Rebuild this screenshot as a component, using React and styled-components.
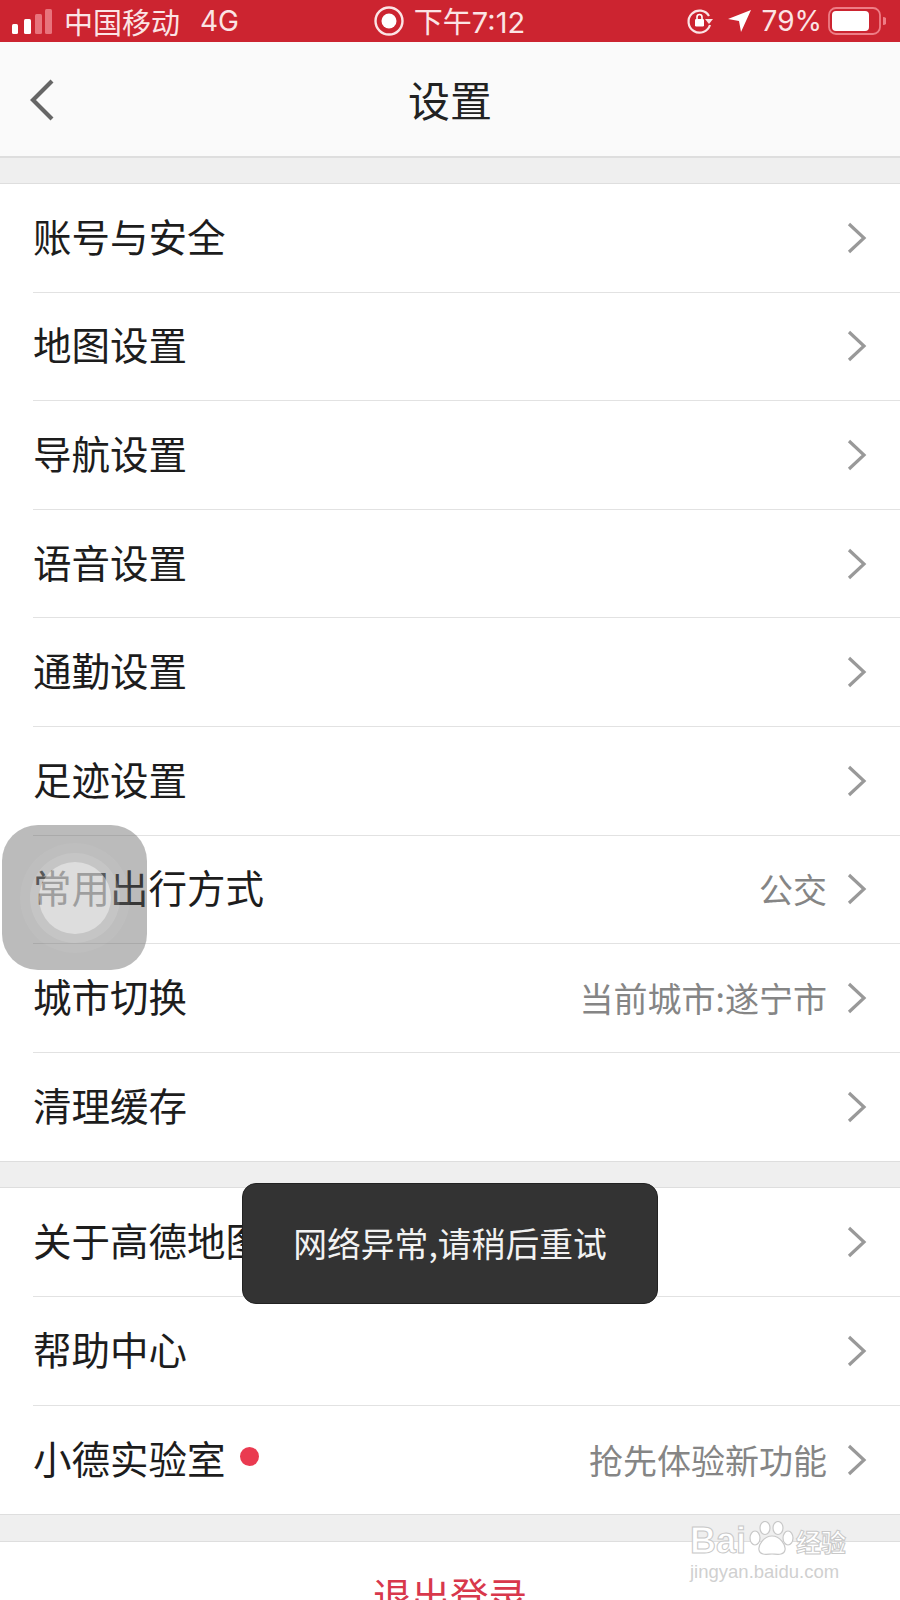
import React from 'react';
import styled, { createGlobalStyle } from 'styled-components';

const GlobalStyle = createGlobalStyle`
  html, body {
    margin: 0;
    padding: 0;
    background: #efefef;
  }
  * {
    box-sizing: border-box;
  }
`;

const FONT = `"Noto Sans CJK SC", "Noto Sans", sans-serif`;

const Page = styled.div`
  position: relative;
  width: 900px;
  height: 1600px;
  overflow: hidden;
  background: #efefef;
  font-family: ${FONT};
`;

const StatusBar = styled.div`
  height: 42px;
  background: #cc2430;
  color: #fbe4e5;
  display: grid;
  grid-template-columns: 1fr auto 1fr;
  align-items: center;
  padding: 0 14px 0 12px;
  font-size: 29px;
  line-height: 36px;
`;

const StatusGroup = styled.div`
  display: flex;
  align-items: center;
  justify-content: ${props => (props.$end ? 'flex-end' : 'flex-start')};
  gap: ${props => props.$gap || 0}px;
`;

const Latin = styled.span`
  font-family: Inter, "Liberation Sans", sans-serif;
  font-size: ${props => props.$size || 28}px;
  margin-left: ${props => props.$left || 0}px;
`;

const NavBar = styled.div`
  height: 116px;
  background: #fafafa;
  border-bottom: 2px solid #dedede;
  display: flex;
  align-items: center;
  justify-content: center;
  position: relative;
`;

const BackButton = styled.svg`
  position: absolute;
  left: 28px;
  top: 36px;
`;

const NavTitle = styled.div`
  font-size: 42px;
  line-height: 60px;
  color: #222;
`;

const Group = styled.div`
  margin-top: ${props => props.$top}px;
  background: #fff;
  border-top: 1px solid #dedede;
  border-bottom: 1px solid #dedede;
  padding-left: 33px;
`;

const Row = styled.div`
  height: ${props => props.$height || 108.6}px;
  display: flex;
  align-items: center;
  padding-right: 33px;
  padding-bottom: 6px;
  border-bottom: ${props => (props.$last ? 'none' : '1px solid #e2e2e2')};
`;

const Label = styled.div`
  font-size: 38.5px;
  line-height: 50px;
  color: #1d1d1d;
  flex: 1;
  display: flex;
  align-items: center;
`;

const Dot = styled.span`
  width: 19px;
  height: 19px;
  border-radius: 50%;
  background: #ea3a50;
  margin-left: 14px;
`;

const Value = styled.div`
  font-size: 34px;
  line-height: 50px;
  color: #858585;
  margin-right: 20px;
  margin-top: 6px;
`;

const ChevronIcon = styled.svg`
  flex: none;
  margin-top: 6px;
`;

const Logout = styled.div`
  margin-top: 26px;
  background: #fff;
  border-top: 1px solid #dedede;
  height: 100px;
  padding-top: 24px;
  text-align: center;
  font-size: 38.5px;
  line-height: 56px;
  color: #d8384c;
`;

const Toast = styled.div`
  position: absolute;
  left: 242px;
  top: 1183px;
  width: 416px;
  height: 121px;
  background: #333;
  border: 1px solid #222;
  border-radius: 14px;
  color: #f2f2f2;
  font-size: 33.8px;
  display: flex;
  align-items: center;
  justify-content: center;
  padding-bottom: 2px;
`;

const AssistiveTouch = styled.div`
  position: absolute;
  left: 2px;
  top: 825px;
  width: 145px;
  height: 145px;
  border-radius: 36px;
  background: rgba(92, 92, 92, 0.42);
  display: flex;
  align-items: center;
  justify-content: center;
`;

const TouchRing = styled.div`
  width: ${props => props.$size}px;
  height: ${props => props.$size}px;
  border-radius: 50%;
  background: rgba(255, 255, 255, ${props => props.$alpha});
  display: flex;
  align-items: center;
  justify-content: center;
`;

const Watermark = styled.div`
  position: absolute;
  left: 690px;
  top: 1503px;
  width: 165px;
  height: 78px;
  color: #fff;
  font-family: "Liberation Sans", sans-serif;
  pointer-events: none;
`;

const MarkTop = styled.div`
  display: flex;
  align-items: flex-end;
  height: 54px;
`;

const MarkWord = styled.span`
  font-size: ${props => props.$size}px;
  line-height: 32px;
  font-weight: 700;
  margin-left: ${props => props.$left || 0}px;
  -webkit-text-stroke: 1px #c8c8c8;
  font-family: ${props => (props.$cjk ? FONT : '"Liberation Sans", sans-serif')};
`;

const MarkUrl = styled.div`
  font-size: 18.5px;
  line-height: 22px;
  margin-top: 4px;
  color: #d0d0d0;
  white-space: nowrap;
`;

const Chevron = () => (
  <ChevronIcon width="20" height="32" viewBox="0 0 20 32">
    <path d="M2 2 L17 16 L2 30" fill="none" stroke="#999" strokeWidth="3.2" />
  </ChevronIcon>
);

const SignalIcon = () => (
  <svg width="42" height="26" viewBox="0 0 42 26">
    <rect x="0" y="16" width="6" height="10" rx="1.5" fill="#fff" />
    <rect x="12" y="11" width="7" height="15" rx="1.5" fill="#fff" />
    <rect x="23" y="6" width="7" height="20" rx="1.5" fill="#e8737c" />
    <rect x="33" y="1" width="7" height="25" rx="1.5" fill="#e8737c" />
  </svg>
);

const RecordIcon = () => (
  <svg width="32" height="32" viewBox="0 0 32 32">
    <circle cx="16" cy="16" r="13.5" fill="none" stroke="#fbe4e5" strokeWidth="2.4" />
    <circle cx="16" cy="16" r="7.5" fill="#fff" />
  </svg>
);

const RotationLockIcon = () => (
  <svg width="28" height="28" viewBox="0 0 28 28">
    <path d="M23 9 A11 11 0 1 0 24 18" fill="none" stroke="#fbe4e5" strokeWidth="2.2" />
    <path d="M19 12 L27 12 L23 17 Z" fill="#fbe4e5" />
    <rect x="9" y="12" width="9" height="7.5" rx="1.2" fill="#fff" />
    <path d="M11 12 V10 A2.5 2.5 0 0 1 16 10 V12" fill="none" stroke="#fff" strokeWidth="1.6" />
  </svg>
);

const LocationIcon = () => (
  <svg width="24" height="24" viewBox="0 0 24 24">
    <path d="M23 1 L13 23 L11 12 L0 10 Z" fill="#fff" />
  </svg>
);

const BatteryIcon = () => (
  <svg width="58" height="28" viewBox="0 0 58 28">
    <rect x="1" y="1" width="51" height="26" rx="7" fill="none" stroke="#ee7d86" strokeWidth="1.8" />
    <rect x="4" y="4" width="37" height="20" rx="4" fill="#fff" />
    <path d="M55 10 A4 4 0 0 1 55 18 Z" fill="#ee7d86" />
  </svg>
);

const PawIcon = () => (
  <svg width="48" height="36" viewBox="0 0 48 36">
    <g fill="#fff" stroke="#c8c8c8" strokeWidth="1.2">
      <ellipse cx="7" cy="17" rx="5" ry="7" />
      <ellipse cx="17" cy="7" rx="5" ry="6.5" />
      <ellipse cx="30" cy="7" rx="5" ry="6.5" />
      <ellipse cx="40" cy="17" rx="5" ry="7" />
      <path d="M24 15 C16 15 10 24 11 29 C12 35 20 33 24 33 C28 33 36 35 37 29 C38 24 32 15 24 15 Z" />
    </g>
  </svg>
);

const firstGroup = [
  { label: '账号与安全' },
  { label: '地图设置' },
  { label: '导航设置' },
  { label: '语音设置' },
  { label: '通勤设置' },
  { label: '足迹设置' },
  { label: '常用出行方式', value: '公交' },
  { label: '城市切换', value: '当前城市:遂宁市' },
  { label: '清理缓存' },
];

const secondGroup = [
  { label: '关于高德地图' },
  { label: '帮助中心' },
  { label: '小德实验室', dot: true, value: '抢先体验新功能' },
];

const SettingRows = ({ items }) =>
  items.map((item, i) => (
    <Row key={item.label} $last={i === items.length - 1}>
      <Label>
        {item.label}
        {item.dot && <Dot />}
      </Label>
      {item.value && <Value>{item.value}</Value>}
      <Chevron />
    </Row>
  ));

const App = () => (
  <Page>
    <GlobalStyle />
    <StatusBar>
      <StatusGroup>
        <SignalIcon />
        <span style={{ marginLeft: 10 }}>中国移动</span>
        <Latin $left={20}>4G</Latin>
      </StatusGroup>
      <StatusGroup $gap={9}>
        <RecordIcon />
        <span>
          下午<Latin $size={29}>7:12</Latin>
        </span>
      </StatusGroup>
      <StatusGroup $end>
        <RotationLockIcon />
        <span style={{ width: 14 }} />
        <LocationIcon />
        <Latin $left={10}>79%</Latin>
        <span style={{ width: 6 }} />
        <BatteryIcon />
      </StatusGroup>
    </StatusBar>
    <NavBar>
      <BackButton width="28" height="44" viewBox="0 0 28 44">
        <path d="M24 3 L5 22 L24 41" fill="none" stroke="#666" strokeWidth="4.2" />
      </BackButton>
      <NavTitle>设置</NavTitle>
    </NavBar>
    <Group $top={25}>
      <SettingRows items={firstGroup} />
    </Group>
    <Group $top={25}>
      <SettingRows items={secondGroup} />
    </Group>
    <Logout>退出登录</Logout>
    <AssistiveTouch>
      <TouchRing $size={110} $alpha={0.05}>
        <TouchRing $size={90} $alpha={0.12}>
          <TouchRing $size={72} $alpha={0.42} />
        </TouchRing>
      </TouchRing>
    </AssistiveTouch>
    <Toast>网络异常,请稍后重试</Toast>
    <Watermark>
      <MarkTop>
        <MarkWord $size={36}>Bai</MarkWord>
        <span style={{ width: 0 }} />
        <div style={{ display: 'flex', flexDirection: 'column', alignItems: 'center', marginLeft: 2 }}>
          <PawIcon />
        </div>
        <MarkWord $size={25} $cjk>经验</MarkWord>
      </MarkTop>
      <MarkUrl>jingyan.baidu.com</MarkUrl>
    </Watermark>
  </Page>
);

export default App;
